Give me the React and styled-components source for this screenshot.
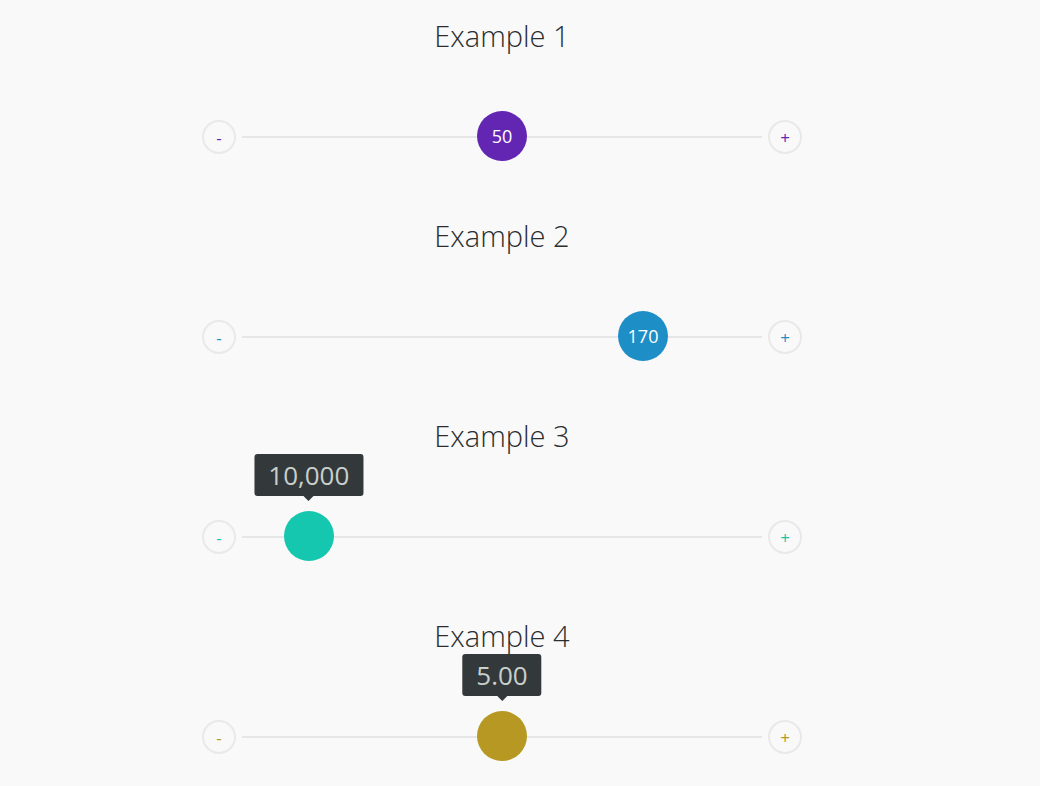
import React from "react";
import styled, { createGlobalStyle } from "styled-components";

const examples = [
	{ title: "Example 1", color: "#6326b2", pos: 0.5, label: "50", inside: true },
	{ title: "Example 2", color: "#1e8ec7", pos: 0.8, label: "170", inside: true },
	{ title: "Example 3", color: "#14c7ae", pos: 0.089, label: "10,000", inside: false },
	{ title: "Example 4", color: "#b79823", pos: 0.5, label: "5.00", inside: false },
];

const GlobalStyle = createGlobalStyle`
	html, body {
		margin: 0;
		background: #f9f9f9;
		font-family: "Open Sans", "Liberation Sans", sans-serif;
	}
`;

export default function App() {
	return (
		<>
			<GlobalStyle />
			<Page>
				{examples.map((ex) => (
					<Section key={ex.title}>
						<Title>{ex.title}</Title>
						<Row>
							<StepButton color={ex.color}>-</StepButton>
							<Track>
								<ThumbSlot style={{ left: `calc(25px + (100% - 50px) * ${ex.pos})` }}>
									{!ex.inside && <Tip>{ex.label}</Tip>}
									<Thumb color={ex.color}>{ex.inside ? ex.label : ""}</Thumb>
								</ThumbSlot>
							</Track>
							<StepButton color={ex.color}>+</StepButton>
						</Row>
					</Section>
				))}
			</Page>
		</>
	);
}

const Page = styled.div`
	width: 600px;
	margin-left: 202px;
`;

const Section = styled.div`
	height: 200px;
	padding-top: 13px;
	box-sizing: border-box;
	display: flex;
	flex-direction: column;
`;

const Title = styled.h2`
	margin: 0;
	text-align: center;
	font-weight: 300;
	font-size: 29px;
	line-height: 46px;
	color: #2a2e30;
`;

const Row = styled.div`
	margin-top: 53px;
	height: 50px;
	display: flex;
	align-items: center;
	gap: 6px;
`;

const StepButton = styled.div`
	width: 34px;
	height: 34px;
	box-sizing: border-box;
	border: 2px solid #e9e9e9;
	border-radius: 50%;
	display: flex;
	align-items: center;
	justify-content: center;
	font-size: 17px;
	line-height: 1;
	padding-top: 1px;
	color: ${(p) => p.color};
	flex-shrink: 0;
`;

const Track = styled.div`
	flex: 1;
	height: 2px;
	background: #e6e6e6;
	position: relative;
`;

const ThumbSlot = styled.div`
	position: absolute;
	top: 0;
	width: 0;
	height: 0;
`;

const Thumb = styled.div`
	position: absolute;
	left: -25px;
	top: -25px;
	width: 50px;
	height: 50px;
	border-radius: 50%;
	background: ${(p) => p.color};
	color: #fff;
	font-size: 18px;
	display: flex;
	align-items: center;
	justify-content: center;
`;

const Tip = styled.div`
	position: absolute;
	bottom: 40px;
	left: 0;
	transform: translateX(-50%);
	height: 42px;
	padding: 0 14px;
	background: #33393b;
	border-radius: 3px;
	color: #c9cfcc;
	font-size: 26px;
	line-height: 42px;
	white-space: nowrap;

	&::after {
		content: "";
		position: absolute;
		left: 50%;
		bottom: -5px;
		margin-left: -5px;
		border-left: 5px solid transparent;
		border-right: 5px solid transparent;
		border-top: 5px solid #33393b;
	}
`;
